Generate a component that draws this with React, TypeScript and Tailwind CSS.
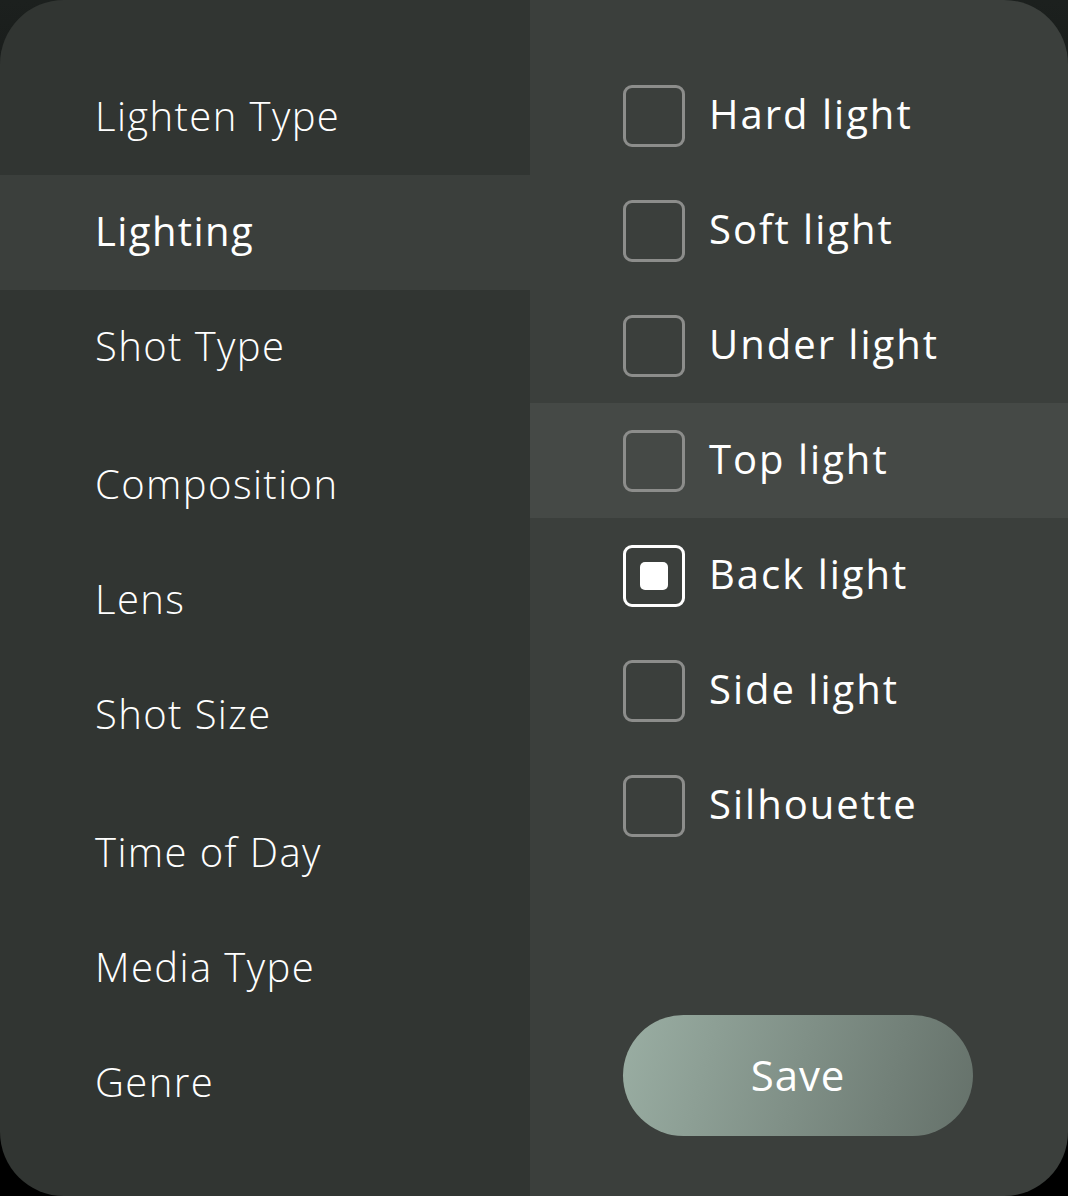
import { useState } from "react";

const categories = [
    { name: 'Lighten Type', gap: false },
    { name: 'Lighting', gap: false },
    { name: 'Shot Type', gap: false },
    { name: 'Composition', gap: true },
    { name: 'Lens', gap: false },
    { name: 'Shot Size', gap: false },
    { name: 'Time of Day', gap: true },
    { name: 'Media Type', gap: false },
    { name: 'Genre', gap: false },
]

const options = ['Hard light', 'Soft light', 'Under light', 'Top light', 'Back light', 'Side light', 'Silhouette']

function Checkbox({ checked }: { checked: boolean }) {
    return <div className={`w-[62px] h-[62px] shrink-0 rounded-[9px] border-[3px] flex items-center justify-center ${checked ? 'border-white' : 'border-[#8c8d8b]'}`}>
        {checked && <div className="w-[28px] h-[28px] rounded-[5px] bg-white" />}
    </div>
}

export default function App() {
    const [active, setActive] = useState('Lighting')
    const [selected, setSelected] = useState('Back light')
    const hovered = 'Top light'

    return <div className="w-[1068px] h-[1196px] bg-linear-to-b from-[#1c201e] to-black" style={{ fontFamily: '"Open Sans", sans-serif' }}>
        <div className="flex h-full rounded-[64px] overflow-hidden">
            <div className="w-[530px] bg-[#313532] pt-[60px] flex flex-col">
                {categories.map((c) => {
                    const isActive = c.name === active
                    return <div key={c.name}
                        onClick={() => setActive(c.name)}
                        className={`h-[115px] ${c.gap ? 'mt-[23px]' : ''} flex items-center pl-[95px] pb-[3px] text-[40px] tracking-[0.035em] text-white cursor-pointer ${isActive ? 'bg-[#3b3f3c] font-normal' : 'font-light'}`}>
                        {c.name}
                    </div>
                })}
            </div>
            <div className="flex-1 bg-[#3b3f3c] pt-[58px] pb-[60px] flex flex-col">
                {options.map((o) => {
                    return <div key={o}
                        onClick={() => setSelected(o)}
                        className={`h-[115px] flex items-center gap-[24px] pl-[93px] cursor-pointer ${o === hovered ? 'bg-[#454946]' : ''}`}>
                        <Checkbox checked={o === selected} />
                        <span className="text-[40px] text-white tracking-[0.05em] pb-[3px]">{o}</span>
                    </div>
                })}
                <div className="mt-auto pl-[93px]">
                    <button className="w-[350px] h-[121px] rounded-full bg-linear-[105deg] from-[#9aaea3] to-[#65716a] text-white text-[42px] font-medium tracking-[0.02em] pb-[3px]">
                        Save
                    </button>
                </div>
            </div>
        </div>
    </div>
}
